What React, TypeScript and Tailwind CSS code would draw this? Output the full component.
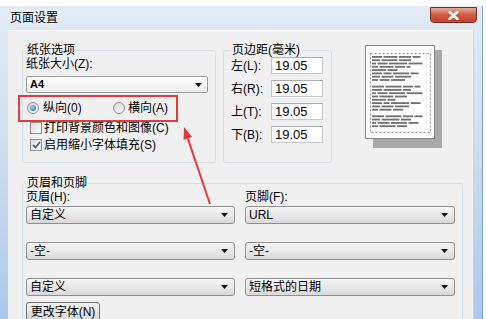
import React from 'react'

// Page setup dialog (Win7 style) with a red annotation

function DropArrow() {
  return (
    <svg width="7" height="4" viewBox="0 0 7 4">
      <path d="M0 0h7L3.5 4z" fill="#111" />
    </svg>
  )
}

function Combo({ value, className = '' }: { value: string; className?: string }) {
  return (
    <div
      className={`flex h-[18px] items-center justify-between rounded-[3px] border border-[#8e8f8f] bg-gradient-to-b from-[#f4f4f4] via-[#e9e9e9] to-[#d9d9d9] pl-[3px] pr-[6px] leading-[16px] ${className}`}
    >
      <span>{value}</span>
      <DropArrow />
    </div>
  )
}

function Radio({ checked }: { checked?: boolean }) {
  return (
    <span className="flex h-[12px] w-[12px] shrink-0 items-center justify-center rounded-full border border-[#8e8f8f] bg-gradient-to-br from-[#d6d6d6] to-[#fbfbfb]">
      {checked && (
        <span className="h-[6px] w-[6px] rounded-full bg-[radial-gradient(circle_at_35%_35%,#9bd8f7,#1a5f9e)]" />
      )}
    </span>
  )
}

function Check({ checked }: { checked?: boolean }) {
  return (
    <span className="flex h-[12px] w-[12px] shrink-0 items-center justify-center border border-[#8e8f8f] bg-gradient-to-br from-[#dcdcdc] to-[#fcfcfc]">
      {checked && (
        <svg width="9" height="8" viewBox="0 0 9 8">
          <path d="M1 4l2.5 2.5L8 1" stroke="#4a5f97" strokeWidth="1.8" fill="none" />
        </svg>
      )}
    </span>
  )
}

function MarginRow({ label, value }: { label: string; value: string }) {
  return (
    <div className="flex h-[17px] items-center">
      <span className="w-[40px]">{label}</span>
      <div className="flex h-[17px] w-[52px] items-center border border-[#c4c7cc] border-t-[#abadb3] bg-white pl-[3px] text-[13px]">
        {value}
      </div>
    </div>
  )
}

// each line of the mini page: word lengths
const previewLines: number[][] = [
  [10, 14, 12, 8], [8, 16, 12], [4, 10, 18, 14], [6, 14, 10, 4], [14, 10], [10, 8, 16, 8], [8, 12, 16], [6, 10, 14], [],
  [12, 16, 10, 6], [10, 18, 8], [4, 10, 16, 16], [6, 14, 12], [14, 8], [10, 6, 18, 10], [8, 12, 14], [6, 12, 10], [],
  [12, 16, 10, 8], [8, 18, 10], [4, 12, 16, 10], [6, 16, 10],
]

function PagePreview() {
  return (
    <svg width="78" height="104" viewBox="0 0 78 104">
      <rect x="8" y="5" width="69" height="98" fill="#a8a8a8" />
      <rect x="0.5" y="0.5" width="69" height="93" fill="#fff" stroke="#8a8a8a" />
      <rect x="5.5" y="8.5" width="60" height="79" fill="none" stroke="#8a8a8a" strokeDasharray="2 2" />
      {previewLines.map((words, i) => {
        let x = 7
        return words.map((w, j) => {
          const r = <rect key={`${i}-${j}`} x={x} y={11 + i * 3.3} width={w} height="1.8" fill="#333" opacity="0.7" />
          x += w + 1.5
          return r
        })
      })}
    </svg>
  )
}

export default function App() {
  return (
    <div className="relative h-[319px] w-[486px] overflow-hidden bg-white font-['Liberation_Sans','Noto_Sans_CJK_SC',sans-serif] text-[12px] text-black">
      <div className="mt-[6px] flex h-[313px] w-[483px] flex-col border-r border-[#7fa3cf] bg-gradient-to-b from-[#e2ebf5] via-[#cddcee] to-[#a9c8ec]">
        {/* title bar */}
        <div className="flex h-[24px] shrink-0 justify-between">
          <span className="self-center pl-[10px] text-[12px] leading-[14px] [text-shadow:0_0_6px_#fff]">页面设置</span>
          <div className="mr-[5px] mt-[1px] flex h-[16px] w-[47px] items-center justify-center rounded-b-[4px] border border-[#7a2a20] bg-gradient-to-b from-[#e9a694] via-[#d05a44] to-[#c2412c]">
            <svg width="11" height="9" viewBox="0 0 11 9">
              <path d="M1.5 1l8 7M9.5 1l-8 7" stroke="#fff" strokeWidth="2.4" strokeLinecap="round" />
            </svg>
          </div>
        </div>

        {/* body */}
        <div className="ml-[8px] w-[466px] flex-1 overflow-hidden border-r border-[#c9d6e4] bg-[#f0f0f0] pl-[14px] pt-[13px] shadow-[inset_0_1px_0_#fff]">
          <div className="flex">
            <fieldset className="h-[120px] w-[194px] rounded-[3px] border border-[#d5dfe5] pl-[3px]">
              <legend className="px-[1px] leading-[14px]">纸张选项</legend>
              <div className="leading-[14px]">纸张大小(Z):</div>
              <div className="mt-[5px] flex h-[17px] w-[182px] items-center justify-between rounded-[2px] border border-[#9a9a9a] bg-gradient-to-b from-white to-[#ececec] pl-[3px] pr-[5px] font-bold">
                <span className="text-[11px]">A4</span>
                <DropArrow />
              </div>
              <div className="mt-[7px] flex h-[16px] items-center">
                <div className="ml-[1px] flex w-[86px] items-center">
                  <Radio checked />
                  <span className="ml-[4px]">纵向(0)</span>
                </div>
                <Radio />
                <span className="ml-[3px]">横向(A)</span>
              </div>
              <div className="mt-[4px] flex h-[16px] items-center pl-[4px]">
                <Check />
                <span className="ml-[2px]">打印背景颜色和图像(C)</span>
              </div>
              <div className="mt-[1px] flex h-[16px] items-center pl-[4px]">
                <Check checked />
                <span className="ml-[2px]">启用缩小字体填充(S)</span>
              </div>
            </fieldset>

            <fieldset className="ml-[7px] h-[120px] w-[109px] rounded-[3px] border border-[#d5dfe5] pl-[7px]">
              <legend className="px-[1px] leading-[14px]">页边距(毫米)</legend>
              <div className="flex flex-col gap-[6px]">
                <MarginRow label="左(L):" value="19.05" />
                <MarginRow label="右(R):" value="19.05" />
                <MarginRow label="上(T):" value="19.05" />
                <MarginRow label="下(B):" value="19.05" />
              </div>
            </fieldset>

            <div className="ml-[33px] mt-[2px]">
              <PagePreview />
            </div>
          </div>

          <fieldset className="mt-[13px] h-[160px] w-[441px] rounded-[3px] border border-[#d5dfe5] pl-[3px]">
            <legend className="px-[1px] leading-[14px]">页眉和页脚</legend>
            <div className="grid grid-cols-[209px_210px] gap-x-[10px]">
              <div className="flex flex-col">
                <div className="h-[14px] leading-[14px]">页眉(H):</div>
                <Combo value="自定义" className="mt-[2px]" />
                <Combo value="-空-" className="mt-[18px]" />
                <Combo value="自定义" className="mt-[18px]" />
                <div className="mt-[6px] flex h-[20px] w-[74px] items-center justify-center rounded-[3px] border border-[#707070] bg-gradient-to-b from-[#f2f2f2] to-[#d6d6d6]">
                  更改字体(N)
                </div>
              </div>
              <div className="flex flex-col">
                <div className="h-[14px] leading-[14px]">页脚(F):</div>
                <Combo value="URL" className="mt-[2px]" />
                <Combo value="-空-" className="mt-[18px]" />
                <Combo value="短格式的日期" className="mt-[18px]" />
              </div>
            </div>
          </fieldset>
        </div>
      </div>

      {/* red annotation box */}
      <div className="pointer-events-none absolute left-[18px] top-[95px] h-[27px] w-[160px] border-2 border-[#e23a3a]" />
      {/* red arrow */}
      <svg className="pointer-events-none absolute left-0 top-0" width="486" height="319">
        <line x1="210" y1="204" x2="187.8" y2="138.4" stroke="#e23a3a" strokeWidth="2" />
        <polygon points="184,127 192.1,136.9 183.6,139.8" fill="#e23a3a" />
      </svg>
    </div>
  )
}
